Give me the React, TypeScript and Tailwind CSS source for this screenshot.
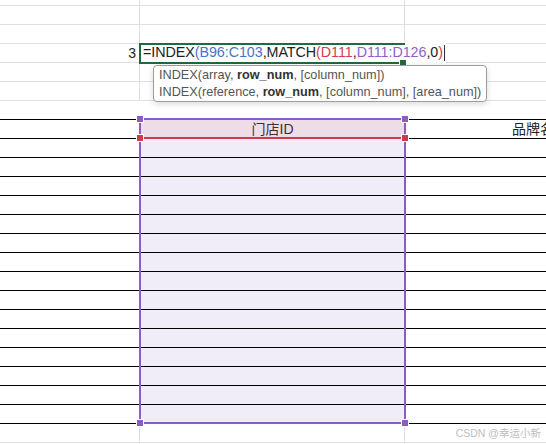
import React from 'react';

type RowKind = 'light' | 'dark';

interface Row {
  h: string;
  kind: RowKind;
  a?: React.ReactNode;
  b?: React.ReactNode;
  c?: React.ReactNode;
  header?: boolean;
  selected?: boolean;
  editing?: boolean;
}

const font = { fontFamily: '"Liberation Sans", Arial, "Noto Sans CJK SC", sans-serif' };

const Formula: React.FC = () => (
  <span className="whitespace-nowrap text-[14.3px] tracking-[-0.05px] text-[#222]">
    =INDEX<span className="text-[#4a74c9]">(B96:C103</span>,MATCH
    <span className="text-[#d2404e]">(D111</span>,
    <span className="text-[#8e61c9]">D111:D126</span>,0
    <span className="text-[#d2404e]">)</span>
  </span>
);

// the cell being typed into: green frame, text runs over the next cell
const EditCell: React.FC = () => (
  <div className="relative self-stretch w-full flex items-center pl-[3px]">
    <div className="flex items-center bg-white pr-[1px]">
      <Formula />
      <span className="ml-[1px] w-px h-[16px] bg-[#333]" />
    </div>
    <div className="pointer-events-none absolute -top-[1px] -left-[1px] right-[-1px] h-[2px] bg-[#21693f]" />
    <div className="pointer-events-none absolute -top-[1px] -left-[1px] w-[2px] h-[21px] bg-[#21693f]" />
    <div className="pointer-events-none absolute -bottom-[2px] -left-[1px] right-[3px] h-[2px] bg-[#21693f]" />
    <span className="absolute right-[-2px] -bottom-[4px] w-[6px] h-[6px] bg-[#21693f] outline outline-1 outline-white" />
  </div>
);

const Handle: React.FC<{ className: string; red?: boolean }> = ({ className, red }) => (
  <span
    className={`absolute w-[6px] h-[6px] outline outline-1 outline-white ${red ? 'bg-[#c83c4d]' : 'bg-[#8b5cc4]'} ${className}`}
  />
);

const App: React.FC = () => {
  const rows: Row[] = [];
  rows.push({ h: 'h-[6px]', kind: 'light' });
  for (let i = 0; i < 5; i++) {
    rows.push({
      h: 'h-[19px]',
      kind: 'light',
      a: i === 2 ? <span className="text-[14px] text-[#222] pr-[3px]">3</span> : undefined,
      editing: i === 2,
    });
  }
  rows.push({ h: 'h-[19px]', kind: 'dark' });
  rows.push({
    h: 'h-[19px]',
    kind: 'dark',
    header: true,
    selected: true,
    b: <span className="text-[14px] text-[#333]">门店ID</span>,
    c: <span className="text-[14px] text-[#222] whitespace-nowrap pl-[107px]">品牌名称</span>,
  });
  for (let i = 0; i < 15; i++) {
    rows.push({ h: 'h-[19px]', kind: 'dark', selected: true });
  }
  rows.push({ h: 'h-[19px]', kind: 'light' });

  return (
    <div className="relative w-[546px] h-[444px] overflow-hidden bg-white" style={font}>
      {/* grid */}
      <div className="flex flex-col">
        {rows.map((row, idx) => {
          const line = row.kind === 'light' ? 'border-[#e0e0e0]' : 'border-black';
          const vline = row.kind === 'light' ? 'border-r border-r-[#e0e0e0]' : '';
          const fill = row.header ? 'bg-[#eedde7]' : row.selected ? 'bg-[#f0ecf8]' : '';
          return (
            <div key={idx} className={`flex shrink-0 box-border border-b ${line} ${row.h}`}>
              <div className={`w-[140px] shrink-0 flex items-center justify-end ${vline}`}>{row.a}</div>
              <div className={`w-[265px] shrink-0 flex items-center justify-center ${vline} ${fill}`}>
                {row.editing ? <EditCell /> : row.b}
              </div>
              <div className="flex-1 min-w-0 flex items-center overflow-hidden">{row.c}</div>
            </div>
          );
        })}
      </div>

      {/* selection range */}
      <div className="pointer-events-none absolute left-[139px] top-[118px] w-[267px] h-[306px] border-2 border-[#8b5cc4]">
        <div className="absolute left-0 right-0 top-[17px] h-[2px] bg-[#c83c4d]" />
        <Handle className="-left-[4px] -top-[4px]" />
        <Handle className="-right-[4px] -top-[4px]" />
        <Handle red className="-left-[4px] top-[15px]" />
        <Handle red className="-right-[4px] top-[15px]" />
        <Handle className="-left-[4px] -bottom-[4px]" />
        <Handle className="-right-[4px] -bottom-[4px]" />
      </div>

      {/* function hint */}
      <div className="absolute left-[153px] top-[65px] w-[334px] h-[37px] rounded-[4px] border border-[#9c9c9c] bg-white shadow-[0_2px_6px_rgba(0,0,0,0.15)] px-[5px] py-[1px] text-[12.7px] leading-[17px] text-[#555]">
        <div className="whitespace-nowrap">
          INDEX(array, <b className="text-[#333]">row_num</b>, [column_num])
        </div>
        <div className="whitespace-nowrap">
          INDEX(reference, <b className="text-[#333]">row_num</b>, [column_num], [area_num])
        </div>
      </div>

      <div
        className="absolute right-[5px] top-[426px] text-[10.5px] text-[#bdbdbd] whitespace-nowrap"
        style={{ fontFamily: '"Liberation Sans", "Noto Sans CJK SC", sans-serif' }}
      >
        CSDN @幸运小新
      </div>
    </div>
  );
};

export default App;
